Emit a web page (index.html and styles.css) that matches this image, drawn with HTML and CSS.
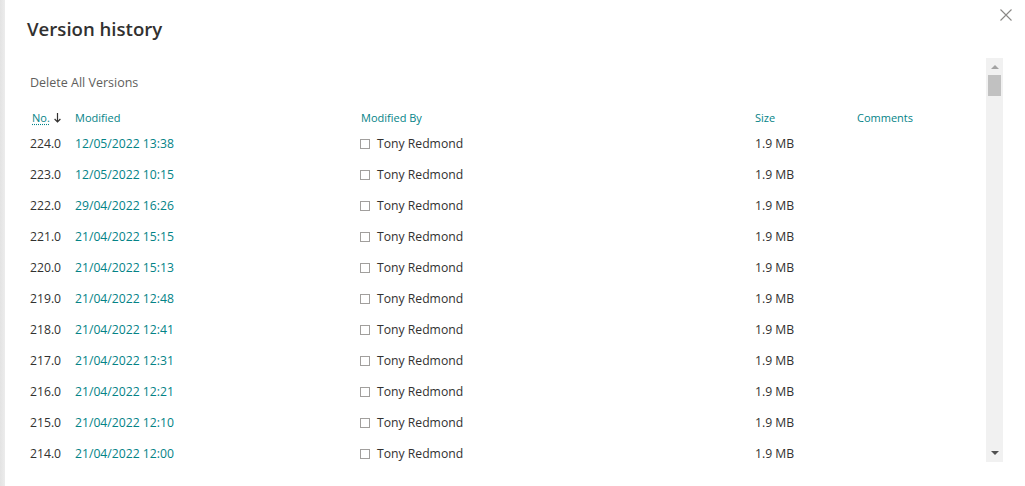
FILE: index.html
```html
<!DOCTYPE html>
<html lang="en">

<head>
  <meta charset="UTF-8">
  <meta name="viewport" content="width=device-width, initial-scale=1.0">
  <title>Version history</title>
  <link rel="stylesheet" href="styles.css">
</head>

<body>
  <div class="page">
    <div class="backdrop"></div>
    <div class="dialog">
      <div class="dialog_head">
        <h1>Version history</h1>
        <button type="button" class="close_btn" aria-label="Close">
          <svg width="12" height="12" viewBox="0 0 12 12">
            <path d="M0.5 0.5 L11.5 11.5 M11.5 0.5 L0.5 11.5" stroke="#8a8886" stroke-width="1.1" fill="none" />
          </svg>
        </button>
      </div>
      <div class="dialog_body">
        <div class="list_area">
          <div class="delete_all">Delete All Versions</div>
          <table class="versions">
            <thead>
              <tr>
                <th class="col_no"><span class="sort_lbl">No.</span>
                  <svg class="sort_arrow" width="7" height="10" viewBox="0 0 7 10">
                    <path d="M3.5 0 V9 M0.6 6 L3.5 9 L6.4 6" stroke="#323130" stroke-width="1.2" fill="none" />
                  </svg>
                </th>
                <th class="col_mod">Modified</th>
                <th class="col_by">Modified By</th>
                <th class="col_size">Size</th>
                <th class="col_cmt">Comments</th>
              </tr>
            </thead>
            <tbody id="rows">
            </tbody>
          </table>
        </div>
        <div class="scrollbar">
          <div class="sb_arrow up"></div>
          <div class="sb_thumb"></div>
          <div class="sb_track"></div>
          <div class="sb_arrow down"></div>
        </div>
      </div>
    </div>
  </div>
  <script>
    var versions = [
      ["224.0", "12/05/2022 13:38"],
      ["223.0", "12/05/2022 10:15"],
      ["222.0", "29/04/2022 16:26"],
      ["221.0", "21/04/2022 15:15"],
      ["220.0", "21/04/2022 15:13"],
      ["219.0", "21/04/2022 12:48"],
      ["218.0", "21/04/2022 12:41"],
      ["217.0", "21/04/2022 12:31"],
      ["216.0", "21/04/2022 12:21"],
      ["215.0", "21/04/2022 12:10"],
      ["214.0", "21/04/2022 12:00"]
    ];
    var rows = document.getElementById('rows');
    versions.forEach(function (v) {
      rows.innerHTML += `<tr>
        <td class="col_no">${v[0]}</td>
        <td class="col_mod"><a href="#">${v[1]}</a></td>
        <td class="col_by"><span class="chk"></span>Tony Redmond</td>
        <td class="col_size">1.9 MB</td>
        <td class="col_cmt"></td>
      </tr>`;
    });
  </script>
</body>

</html>
```

FILE: styles.css
```css
html,
body {
  margin: 0;
  padding: 0;
  height: 100%;
  overflow: hidden;
  background: #fff;
  font-family: "Open Sans", "Noto Sans", sans-serif;
  color: #323130;
}

.page {
  display: flex;
  height: 486px;
}

.backdrop {
  width: 5px;
  background: linear-gradient(to right, #e3e3e3, #ececec);
}

.dialog {
  flex: 1;
  display: flex;
  flex-direction: column;
  background: #fff;
}

.dialog_head {
  display: flex;
  justify-content: space-between;
  align-items: flex-start;
  height: 58px;
}

.dialog_head h1 {
  margin: 15px 0 0 22px;
  font-size: 18.6px;
  font-weight: 600;
  line-height: 28px;
  color: #323130;
}

.close_btn {
  border: 0;
  background: none;
  padding: 0;
  margin: 9px 13px 0 0;
  width: 12px;
  height: 12px;
  line-height: 0;
}

.dialog_body {
  display: flex;
  height: 404px;
}

.list_area {
  flex: 1;
  overflow: hidden;
  padding-left: 24px;
}

.delete_all {
  margin: 16px 0 0 1px;
  font-size: 12.5px;
  line-height: 17px;
  color: #605e5c;
}

.versions {
  border-collapse: collapse;
  margin-top: 19px;
  font-size: 12.2px;
}

.versions th {
  text-align: left;
  font-weight: 400;
  font-size: 11px;
  color: #038387;
  height: 25px;
  padding: 0;
  vertical-align: top;
  white-space: nowrap;
}

.versions td {
  height: 31px;
  padding: 0;
  vertical-align: top;
  white-space: nowrap;
  line-height: 18px;
}

.col_no {
  width: 43px;
}

.col_mod {
  width: 286px;
}

.col_by {
  width: 394px;
}

.col_size {
  width: 102px;
}

.col_cmt {
  width: 100px;
}

.versions th.col_no {
  padding-left: 3px;
}

.versions td.col_no {
  padding-left: 1px;
}

.sort_lbl {
  text-decoration: underline dotted;
  text-underline-offset: 2px;
}

.sort_arrow {
  margin-left: 1px;
  vertical-align: -1px;
}

.versions td.col_mod a {
  color: #038387;
  text-decoration: none;
}

.chk {
  display: inline-block;
  width: 8px;
  height: 8px;
  border: 1px solid #a19f9d;
  margin: 0 7px 0 -1px;
  vertical-align: -1px;
}

.scrollbar {
  width: 17px;
  margin-right: 22px;
  background: #f1f1f1;
  display: flex;
  flex-direction: column;
  align-items: center;
}

.sb_arrow {
  width: 0;
  height: 0;
  border-left: 4px solid transparent;
  border-right: 4px solid transparent;
}

.sb_arrow.up {
  margin-top: 7px;
  border-bottom: 4px solid #a3a3a3;
}

.sb_arrow.down {
  margin-bottom: 7px;
  border-top: 4px solid #505050;
}

.sb_thumb {
  margin-top: 6px;
  width: 13px;
  height: 21px;
  background: #c1c1c1;
}

.sb_track {
  flex: 1;
}
```
